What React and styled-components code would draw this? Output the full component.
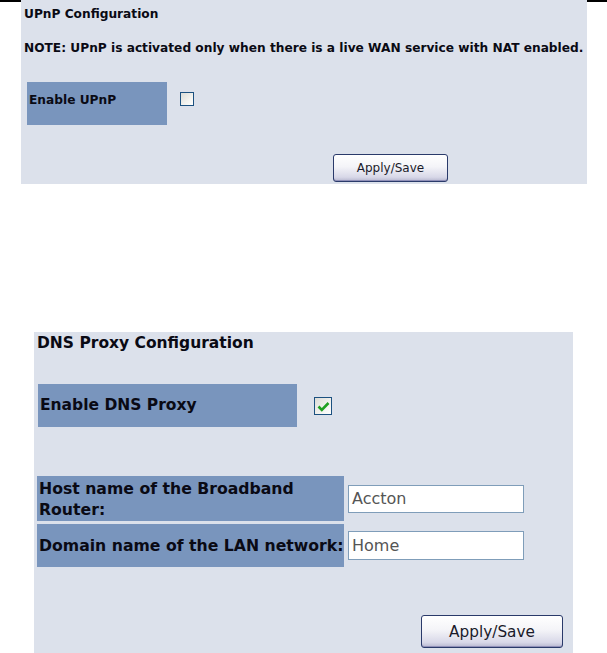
import React from "react";
import styled, { createGlobalStyle } from "styled-components";

const Global = createGlobalStyle`
  html, body { margin: 0; padding: 0; background: #ffffff; }
  body {
    width: 607px; height: 653px; overflow: hidden;
    font-family: "DejaVu Sans", Verdana, sans-serif;
    color: #0a0a14;
  }
`;

const Page = styled.div`
  display: flex;
  flex-direction: column;
  width: 607px;
`;

const TopRow = styled.div`
  display: flex;
  align-items: flex-start;
`;

const Edge = styled.div`
  width: ${(p) => p.$w}px;
  border-top: 2px solid #000;
`;

const Panel = styled.div`
  background: #dce1eb;
  width: ${(p) => p.$w}px;
  height: ${(p) => p.$h}px;
  margin-left: ${(p) => p.$ml || 0}px;
  box-sizing: border-box;
  display: flex;
  flex-direction: column;
`;

const Heading = styled.div`
  font-weight: bold;
  font-size: ${(p) => p.$fs}px;
  line-height: ${(p) => p.$lh}px;
  margin-top: ${(p) => p.$mt}px;
  padding-left: ${(p) => p.$pl}px;
  white-space: nowrap;
`;

const FieldRow = styled.div`
  display: flex;
  align-items: flex-start;
  margin-top: ${(p) => p.$mt}px;
  padding-left: ${(p) => p.$pl}px;
`;

const LabelCell = styled.div`
  background: #7995bd;
  width: ${(p) => p.$w}px;
  height: ${(p) => p.$h}px;
  box-sizing: border-box;
  padding: ${(p) => p.$pad || "0 2px"};
  display: flex;
  align-items: ${(p) => p.$align || "center"};
  font-weight: bold;
  font-size: ${(p) => p.$fs}px;
  line-height: ${(p) => p.$lh}px;
  white-space: nowrap;
`;

const Check = styled.div`
  width: ${(p) => p.$s}px;
  height: ${(p) => p.$s}px;
  box-sizing: border-box;
  margin-left: ${(p) => p.$ml}px;
  margin-top: ${(p) => p.$mt}px;
  border: 1px solid #1c5180;
  background: linear-gradient(135deg, #dcdcd7 0%, #f3f3ef 60%, #ffffff 100%);
  display: flex;
  align-items: center;
  justify-content: center;
`;

const ButtonRow = styled.div`
  display: flex;
  margin-top: ${(p) => p.$mt}px;
  padding-left: ${(p) => p.$pl}px;
`;

const Button = styled.div`
  width: ${(p) => p.$w}px;
  height: ${(p) => p.$h}px;
  box-sizing: border-box;
  border: 1px solid #2a3a6a;
  border-radius: 3px;
  background: linear-gradient(to bottom, #ffffff 0%, #f4f4f8 45%, #d8d8e8 85%, #b8b8d0 100%);
  box-shadow: inset 0 -1px 0 #9090b8;
  display: flex;
  align-items: center;
  justify-content: center;
  font-size: ${(p) => p.$fs}px;
  color: #1a1a2a;
`;

const Gap = styled.div`
  height: ${(p) => p.$h}px;
`;

const Table = styled.div`
  display: grid;
  grid-template-columns: 307px 176px;
  column-gap: 4px;
  row-gap: 3px;
  margin-top: ${(p) => p.$mt}px;
  padding-left: 3px;
`;

const InputBox = styled.div`
  width: 176px;
  height: ${(p) => p.$h}px;
  align-self: center;
  box-sizing: border-box;
  border: 1px solid #7f9db9;
  background: #ffffff;
  font-size: 16px;
  color: #555555;
  display: flex;
  align-items: center;
  padding-left: 3px;
`;

const CheckMark = () => (
  <svg width="13" height="11" viewBox="0 0 13 11">
    <path d="M1.5 5.5 L4.8 8.8 L11.5 2" fill="none" stroke="#21a121" strokeWidth="2.6" />
  </svg>
);

export default function App() {
  return (
    <Page>
      <Global />
      <TopRow>
        <Edge $w={21} />
        <Panel $w={566} $h={184}>
          <Heading $fs={12.2} $lh={14} $mt={7} $pl={3}>UPnP Configuration</Heading>
          <Heading $fs={12.2} $lh={14} $mt={20} $pl={3}>
            NOTE: UPnP is activated only when there is a live WAN service with NAT enabled.
          </Heading>
          <FieldRow $mt={27} $pl={6}>
            <LabelCell $w={140} $h={43} $fs={12.2} $lh={14} $align="flex-start" $pad="11px 2px 0">
              Enable UPnP
            </LabelCell>
            <Check $s={14} $ml={13} $mt={10} />
          </FieldRow>
          <ButtonRow $mt={29} $pl={312}>
            <Button $w={115} $h={28} $fs={12}>Apply/Save</Button>
          </ButtonRow>
        </Panel>
        <Edge $w={20} />
      </TopRow>
      <Gap $h={148} />
      <Panel $w={539} $h={321} $ml={34}>
        <Heading $fs={15.5} $lh={18} $mt={2} $pl={3}>DNS Proxy Configuration</Heading>
        <FieldRow $mt={32} $pl={4}>
          <LabelCell $w={259} $h={43} $fs={15.5} $lh={19}>Enable DNS Proxy</LabelCell>
          <Check $s={18} $ml={17} $mt={13}>
            <CheckMark />
          </Check>
        </FieldRow>
        <Table $mt={49}>
          <LabelCell $w={307} $h={45} $fs={15.7} $lh={21}>
            Host name of the Broadband
            <br />
            Router:
          </LabelCell>
          <InputBox $h={28}>Accton</InputBox>
          <LabelCell $w={307} $h={43} $fs={15.7} $lh={19}>Domain name of the LAN network:</LabelCell>
          <InputBox $h={29}>Home</InputBox>
        </Table>
        <ButtonRow $mt={48} $pl={387}>
          <Button $w={142} $h={33} $fs={15.3}>Apply/Save</Button>
        </ButtonRow>
      </Panel>
    </Page>
  );
}
